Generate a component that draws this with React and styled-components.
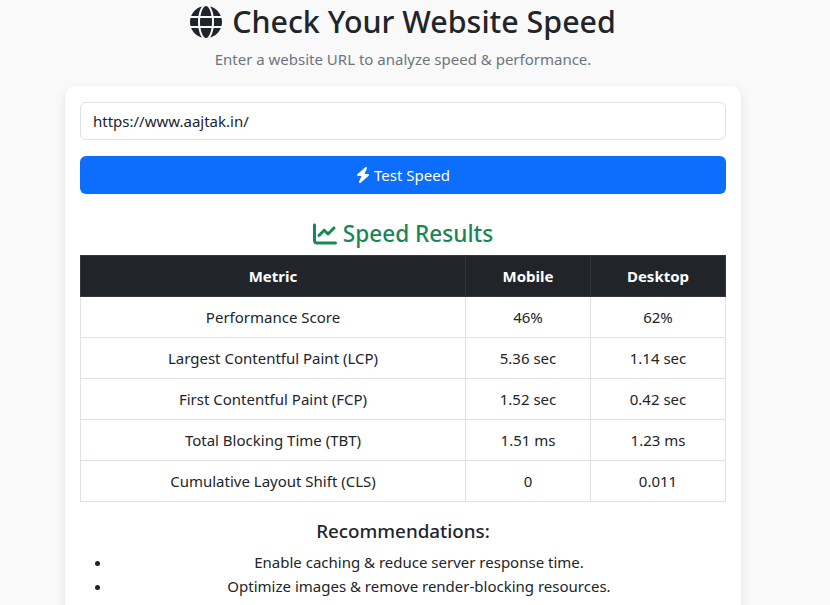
import React from "react";
import styled, { createGlobalStyle } from "styled-components";
import { FaGlobe, FaBolt, FaChartLine } from "react-icons/fa6";

const GlobalStyle = createGlobalStyle`
  * { box-sizing: border-box; }
  html, body { margin: 0; height: 100%; overflow: hidden; }
  body {
    background: #f9f9f9;
    color: #212529;
    font-family: "Noto Sans", "Open Sans", sans-serif;
    font-size: 15px;
    line-height: 24px;
  }
`;

const Page = styled.div`
  width: 806px;
  display: flex;
  flex-direction: column;
  align-items: center;
`;

const Title = styled.h1`
  margin: 0;
  height: 44px;
  display: flex;
  align-items: center;
  gap: 10px;
  font-size: 30.4px;
  font-weight: 500;
  line-height: 44px;
  svg { width: 32px; height: 32px; }
`;

const Subtitle = styled.p`
  margin: 3px 0 15px;
  color: #6c757d;
`;

const Card = styled.div`
  width: 676px;
  padding: 16px 15px 15px;
  background: #fff;
  border-radius: 10px;
  box-shadow: 0 4px 10px rgba(0, 0, 0, 0.1);
`;

const UrlInput = styled.input`
  display: block;
  width: 100%;
  height: 38px;
  padding: 6px 12px;
  border: 1px solid #dee2e6;
  border-radius: 6px;
  color: #212529;
  font: inherit;
`;

const TestButton = styled.button`
  display: flex;
  align-items: center;
  justify-content: center;
  gap: 4px;
  width: 100%;
  height: 38px;
  margin-top: 16px;
  border: 0;
  border-radius: 6px;
  background: #0d6efd;
  color: #fff;
  font: inherit;
  svg { width: 14px; height: 16px; }
`;

const ResultsTitle = styled.h3`
  margin: 24px 0 5px;
  display: flex;
  align-items: center;
  justify-content: center;
  gap: 6px;
  height: 32px;
  color: #198754;
  font-size: 22.6px;
  font-weight: 500;
  svg { width: 24px; height: 24px; }
`;

const Table = styled.table`
  width: 645px;
  border-collapse: collapse;
  table-layout: fixed;
  text-align: center;
`;

const Head = styled.th`
  width: ${(p) => p.$width}px;
  height: 41px;
  padding: 0;
  background: #212529;
  color: #fff;
  border: 1px solid #32383e;
  font-weight: 700;
`;

const Cell = styled.td`
  height: 41px;
  padding: 0;
  border: 1px solid #dee2e6;
`;

const RecTitle = styled.h5`
  margin: 17px 0 7px;
  text-align: center;
  font-size: 18.8px;
  line-height: 24px;
  font-weight: 500;
`;

const RecList = styled.ul`
  margin: 0;
  padding-left: 32px;
  text-align: center;
`;

const rows = [
  ["Performance Score", "46%", "62%"],
  ["Largest Contentful Paint (LCP)", "5.36 sec", "1.14 sec"],
  ["First Contentful Paint (FCP)", "1.52 sec", "0.42 sec"],
  ["Total Blocking Time (TBT)", "1.51 ms", "1.23 ms"],
  ["Cumulative Layout Shift (CLS)", "0", "0.011"],
];

const tips = [
  "Enable caching & reduce server response time.",
  "Optimize images & remove render-blocking resources.",
  "Minify CSS, JavaScript & load files faster.",
];

export default function App() {
  return (
    <>
      <GlobalStyle />
      <Page>
        <Title><FaGlobe /> Check Your Website Speed</Title>
        <Subtitle>Enter a website URL to analyze speed &amp; performance.</Subtitle>
        <Card>
          <UrlInput defaultValue="https://www.aajtak.in/" />
          <TestButton><FaBolt /> Test Speed</TestButton>
          <ResultsTitle><FaChartLine /> Speed Results</ResultsTitle>
          <Table>
            <thead>
              <tr>
                <Head $width={385}>Metric</Head>
                <Head $width={125}>Mobile</Head>
                <Head $width={135}>Desktop</Head>
              </tr>
            </thead>
            <tbody>
              {rows.map((r) => (
                <tr key={r[0]}>
                  {r.map((c, i) => <Cell key={i}>{c}</Cell>)}
                </tr>
              ))}
            </tbody>
          </Table>
          <RecTitle>Recommendations:</RecTitle>
          <RecList>
            {tips.map((t) => <li key={t}>{t}</li>)}
          </RecList>
        </Card>
      </Page>
    </>
  );
}
